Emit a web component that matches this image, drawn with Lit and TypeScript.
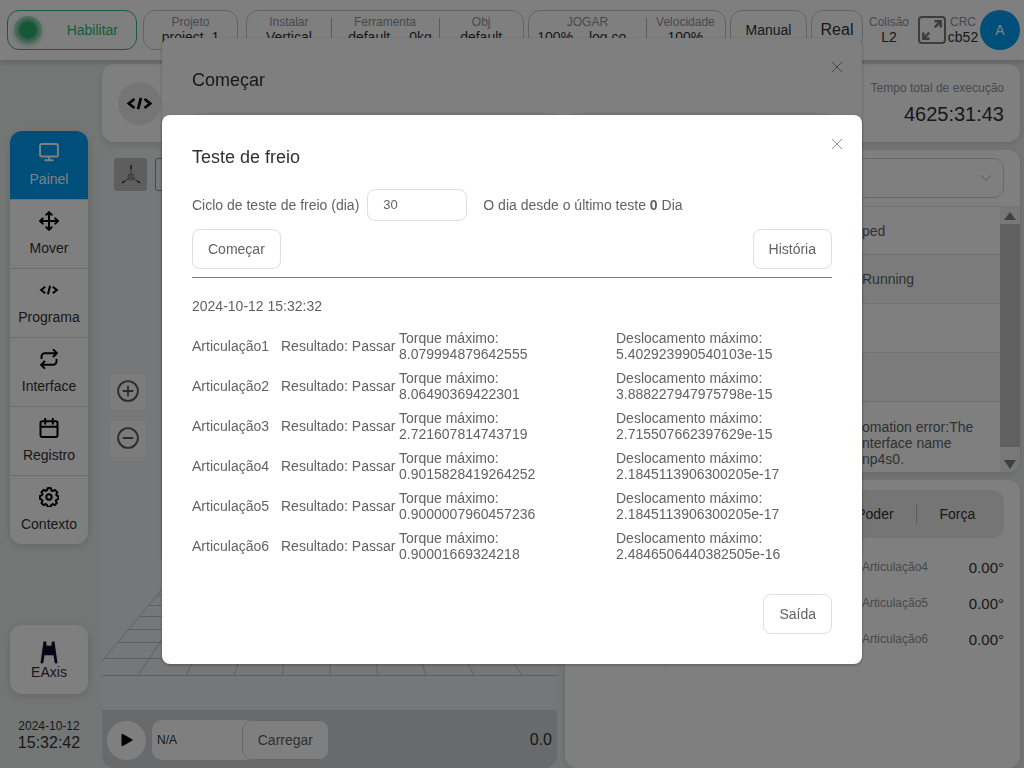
import { LitElement, html, svg, css } from "lit";
import { customElement } from "lit/decorators.js";

const line = (body: unknown, size = 20, weight = 2.4) => html`
  <svg width=${size} height=${size} viewBox="0 0 24 24" fill="none" stroke="currentColor" stroke-width=${weight}
    stroke-linecap="round" stroke-linejoin="round" aria-hidden="true">${body}</svg>`;

const icons = {
  monitor: svg`<rect x="1.300" y="2.500" width="21.400" height="15" rx="2"/><path d="M12 17.500v4.500M7.500 22h9"/>`,
  move: svg`<path d="M12 1.500v21M1.500 12h21M8.800 4.500L12 1.300l3.200 3.200M8.800 19.500l3.200 3.200 3.200-3.200M4.500 8.800L1.300 12l3.200 3.200M19.500 8.800l3.200 3.200-3.200 3.200"/>`,
  code: svg`<path d="M7.500 8L2.500 12l5 4M16.500 8l5 4-5 4M13.300 7l-2.600 10" stroke-linecap="butt" stroke-linejoin="miter"/>`,
  swap: svg`<path d="M17.500 1l4 4-4 4M21 5H7a4 4 0 0 0-4 4v2M6.500 23l-4-4 4-4M3 19h14a4 4 0 0 0 4-4v-2"/>`,
  calendar: svg`<rect x="1.800" y="4" width="20.400" height="18.700" rx="2"/><path d="M7.500 1v6M16.500 1v6M2 10.500h20"/>`,
  gear: svg`<circle cx="12" cy="12" r="3.200"/><path d="M12 1.200l2.300.4.7 2.600 1.600.7 2.400-1.400 1.600 1.300 1.400 1.900-1.300 2.300.6 1.400 2 .7v3.200l-2.400.8-.7 1.600 1.300 2.300-2.600 2.800-2.300-1.300-1.600.7-.8 2.400h-4l-.8-2.400-1.600-.7-2.300 1.300-2.600-2.600 1.300-2.500-.7-1.600-2.400-.8v-3.500l2.400-.8.7-1.600-1.300-2.300 2.600-2.700 2.300 1.300 1.600-.7.8-2.400z"/>`,
};

const results = [
  ["Articulação1", "8.079994879642555", "5.402923990540103e-15"],
  ["Articulação2", "8.06490369422301", "3.888227947975798e-15"],
  ["Articulação3", "2.721607814743719", "2.715507662397629e-15"],
  ["Articulação4", "0.9015828419264252", "2.1845113906300205e-17"],
  ["Articulação5", "0.9000007960457236", "2.1845113906300205e-17"],
  ["Articulação6", "0.90001669324218", "2.4846506440382505e-16"],
];

@customElement("top-bar")
class TopBar extends LitElement {
  static styles = css`
    :host { display: block; background: #fff; box-shadow: 0 2px 6px rgba(0, 0, 0, 0.2); position: relative; }
    * { box-sizing: border-box; }
    .bar { display: flex; align-items: center; gap: 4px; height: 60px; padding: 0 4px 0 7px; }
    button { font: inherit; color: inherit; background: none; cursor: pointer; }
    .enable {
      display: flex; align-items: center; flex: 130 1 130px; height: 40px; margin-right: 2px; padding: 0 18px 0 6px;
      border: 1px solid #2fb673; border-radius: 12px; color: #2fb673; justify-content: space-between;
    }
    .led { width: 28px; height: 28px; border-radius: 50%; background: radial-gradient(circle, #2dae6f 0 8px, #59bf8d 9px, #a5d8bf 13px); box-shadow: 0 2px 5px rgba(45, 174, 111, 0.4); }
    .group { display: flex; height: 40px; padding: 0; border: 1px solid #c4c7cc; border-radius: 12px; }
    .project { flex: 95 1 95px; margin-right: 4px; }
    .setup { flex: 278 1 278px; }
    .play { flex: 198 1 198px; }
    .mode { flex: 77 1 77px; justify-content: center; align-items: center; }
    .real { flex: 52 1 52px; justify-content: center; align-items: center; font-size: 16px; }
    .cell { flex: 84 1 0; min-width: 0; display: flex; flex-direction: column; justify-content: center; text-align: center; line-height: 15px; position: relative; }
    .cell + .cell::before { content: ""; position: absolute; left: 0; top: 7px; bottom: 7px; width: 1px; background: #b4b7bc; }
    .wide { flex-grow: 109; }
    .wider { flex-grow: 124; }
    .label { font-size: 12px; color: #909399; }
    .pair { display: grid; grid-template-columns: 3fr 1fr; padding-right: 6px; white-space: nowrap; }
    .even { grid-template-columns: 1fr 1fr; padding-right: 12px; }
    .info { text-align: center; line-height: 15px; width: 44px; }
    .crc { width: 26px; white-space: nowrap; display: flex; flex-direction: column; align-items: center; }
    .full { display: flex; padding: 0; border: 0; margin-left: 3px; color: #77797d; }
    .avatar { flex: none; width: 40px; height: 40px; padding: 0; border: 0; border-radius: 50%; background: #009cf5; color: #fff; }
  `;
  render() {
    return html`<div class="bar">
      <button class="enable"><span class="led"></span><span>Habilitar</span></button>
      <div class="group project"><div class="cell"><span class="label">Projeto</span><span>project_1</span></div></div>
      <div class="group setup">
        <div class="cell"><span class="label">Instalar</span><span>Vertical</span></div>
        <div class="cell wide"><span class="label">Ferramenta</span><span class="pair"><span>default</span><span>0kg</span></span></div>
        <div class="cell"><span class="label">Obj</span><span>default</span></div>
      </div>
      <div class="group play">
        <div class="cell wider"><span class="label">JOGAR</span><span class="pair even"><span>100%</span><span>log.co</span></span></div>
        <div class="cell"><span class="label">Velocidade</span><span>100%</span></div>
      </div>
      <button class="group mode">Manual</button>
      <button class="group real">Real</button>
      <div class="info"><div class="label">Colisão</div><div>L2</div></div>
      <button class="full" aria-label="Tela cheia">
        <svg width="28" height="28" viewBox="0 0 28 28" fill="none" stroke="currentColor" stroke-width="2">
          <rect x="1" y="1" width="26" height="26" rx="3"/><path d="M16.500 5.300h6.200v6.200M22.700 5.300l-6 6M11.500 22.700H5.300v-6.200M5.300 22.700l6-6" stroke-width="2.400"/>
        </svg>
      </button>
      <div class="info crc"><span class="label">CRC</span><span>cb52</span></div>
      <button class="avatar">A</button>
    </div>`;
  }
}

@customElement("side-nav")
class SideNav extends LitElement {
  static styles = css`
    :host { display: flex; flex-direction: column; padding: 71px 0 16px 10px; }
    * { box-sizing: border-box; }
    nav, .axis { background: #fff; border-radius: 12px; box-shadow: 0 2px 8px rgba(0, 0, 0, 0.14); overflow: hidden; }
    a {
      display: flex; flex-direction: column; align-items: center; justify-content: center; gap: 9px; height: 69px;
      padding-bottom: 2px; line-height: 16px; color: #303133; text-decoration: none; border-bottom: 1px solid #dcdfe2;
    }
    a:last-child { height: 68px; border-bottom: 0; }
    a svg { color: #000; }
    a.on { background: #009cf5; color: #fff; border-bottom-color: #dcdfe2; }
    a.on svg { color: #fff; }
    .axis { margin-top: auto; padding: 16px 0 14px; width: 100%; border: 0; font: inherit; color: #303133; line-height: 16px; }
    .axis svg { display: block; margin: 0 auto; }
    .clock { margin-top: 24px; text-align: center; color: #303133; }
    .date { font-size: 12px; line-height: 16px; }
    .time { font-size: 16px; line-height: 18px; }
  `;
  render() {
    const items: [string, unknown][] = [
      ["Painel", icons.monitor], ["Mover", icons.move], ["Programa", icons.code],
      ["Interface", icons.swap], ["Registro", icons.calendar], ["Contexto", icons.gear],
    ];
    return html`
      <nav>${items.map(([name, icon], i) => html`<a href="#" class=${i === 0 ? "on" : ""}>${line(icon)}<span>${name}</span></a>`)}</nav>
      <button class="axis">
        <svg width="18" height="23" viewBox="0 0 18 23" fill="#0a0a28"><path d="M3.500.500h2.700l.4 4.300h4.800l.4-4.300h2.700l3 21.700h-2.700l-1.300-8H4.500l-1.300 8H.5z"/></svg>
        EAxis
      </button>
      <div class="clock"><div class="date">2024-10-12</div><div class="time">15:32:42</div></div>`;
  }
}

@customElement("view-panel")
class ViewPanel extends LitElement {
  static styles = css`
    :host { display: flex; flex-direction: column; background: #eceef3; border-radius: 12px; overflow: hidden; }
    * { box-sizing: border-box; }
    .scene { flex: 1; position: relative; overflow: hidden; }
    .floor { position: absolute; left: 0; top: 0; width: 100%; height: 100%; }
    .tools { display: flex; gap: 8px; padding: 8px 12px; position: relative; }
    .tool { width: 33px; height: 33px; padding: 0; border: 0; border-radius: 3px; background: #bcbcbe; display: grid; place-items: center; }
    .plain { background: none; border: 1px solid #8c8e92; }
    .zoom { display: flex; flex-direction: column; gap: 11px; padding: 175px 8px 0; position: relative; }
    .zoom button { width: 36px; height: 36px; padding: 0 0 2px; border: 0; border-radius: 4px; background: #f8f9fb; color: #55585c; display: grid; place-items: center; }
    .bar { display: flex; align-items: center; height: 58px; padding: 2px 5px 0; background: #d3d5d9; }
    .run { width: 39px; height: 39px; padding: 0; border: 0; border-radius: 50%; background: #fff; display: grid; place-items: center; }
    .file { display: flex; margin-left: 6px; height: 40px; background: #fff; border-radius: 10px; width: 177px; }
    .file input { flex: 1; min-width: 0; border: 0; background: none; padding: 0 5px; font: inherit; font-size: 12px; color: #303133; }
    .file button { padding: 0 15px; border: 1px solid #d0d3d9; border-radius: 10px; background: #fff; font: inherit; color: #606266; }
    .value { margin-left: auto; font-size: 16px; color: #303133; }
  `;
  render() {
    const spokes = Array.from({ length: 11 }, (_, k) => 228 + (k - 5) * 48);
    const rows = [525.5, 508.5, 492.5, 479.5, 466.5, 455.5, 445.5, 437.5];
    return html`
      <div class="scene">
        <svg class="floor" fill="none" stroke="#bcbfc4">
          ${spokes.map((x) => {
            const t = 0.36;
            return svg`<path d="M${x} 525.5L${x + (228 - x) * t} ${525.5 - 287 * t}"/>`;
          })}
          ${rows.map((y) => {
            const half = (240 * (y - 238.5)) / 287;
            return svg`<path d="M${228 - half} ${y}H${228 + half}"/>`;
          })}
        </svg>
        <div class="tools">
          <button class="tool" aria-label="Eixos">
            <svg width="22" height="22" viewBox="0 0 22 22" fill="none" stroke="#66686b">
              <circle cx="11" cy="13" r="3"/><path d="M11 13V4M11 13l-8 5M11 13l8 5"/><path d="M11 1v4M2 19l3-2M20 19l-3-2" stroke="#333" stroke-width="1.500"/>
            </svg>
          </button>
          <button class="tool plain" aria-label="Enquadrar">
            <svg width="20" height="22" viewBox="0 0 20 22" fill="none" stroke="#333" stroke-width="2"><path d="M1 5V1h5M1 13v5h5M14 1h5v4M19 13v5h-5"/></svg>
          </button>
        </div>
        <div class="zoom">
          <button aria-label="Ampliar">${line(svg`<circle cx="12" cy="12" r="10.800"/><path d="M12 7v10M7 12h10"/>`, 22, 2)}</button>
          <button aria-label="Reduzir">${line(svg`<circle cx="12" cy="12" r="10.800"/><path d="M7 12h10"/>`, 22, 2)}</button>
        </div>
      </div>
      <div class="bar">
        <button class="run" aria-label="Executar"><svg width="12" height="14" viewBox="0 0 12 14"><path d="M1.500 1.800v10.400L10.500 7z" stroke="#000" stroke-width="2" stroke-linejoin="round"/></svg></button>
        <div class="file"><input aria-label="Arquivo" value="N/A" /><button>Carregar</button></div>
        <span class="value">0.0</span>
      </div>`;
  }
}

@customElement("status-panels")
class StatusPanels extends LitElement {
  static styles = css`
    :host { display: grid; grid-template-rows: 322px 1fr; gap: 8px; }
    * { box-sizing: border-box; }
    .card { background: #fff; border-radius: 12px; box-shadow: 0 2px 6px rgba(0, 0, 0, 0.12); overflow: hidden; }
    .log { display: flex; flex-direction: column; }
    .pick { position: relative; margin: 8px 16px; }
    select { width: 100%; height: 40px; border: 1px solid #d0d3d9; border-radius: 10px; background: #fff; appearance: none; font: inherit; padding: 0 16px; color: #606266; }
    .pick svg { position: absolute; right: 12px; top: 14px; pointer-events: none; }
    .list { display: flex; flex: 1; min-height: 0; border-top: 1px solid #e4e7ed; }
    .rows { flex: 1; overflow: hidden; }
    table { width: 100%; border-spacing: 0; color: #606266; line-height: 16px; table-layout: fixed; }
    td { height: 49px; padding: 0 10px; border-bottom: 1px solid #e0e3e8; white-space: pre-line; vertical-align: middle; }
    td:first-child { width: 287px; }
    tr:first-child td { height: 48px; }
    tr:nth-child(even) td { background: #f7f7f7; }
    tr:last-child td { height: 82px; border-bottom: 0; }
    .track { width: 20px; background: #f1f1f1; display: flex; flex-direction: column; align-items: center; }
    .track svg { flex: none; }
    .thumb { width: 100%; flex: 1; background: #c1c1c1; }
    .joints { padding: 10px 16px 16px; }
    .tabs { display: flex; padding: 0 6px; height: 48px; align-items: center; background: #ebebeb; border-radius: 12px; }
    .tabs button { flex: 1; height: 20px; padding: 0; border: 0; background: none; font: inherit; color: #303133; }
    .tabs button + button { border-left: 1px solid #b4b7bc; }
    .values { display: grid; grid-template-columns: 85px 1fr 142px; margin-top: 11px; }
    .half { height: 120px; border-right: 1px solid #e4e7ed; }
    dl { margin: 0; grid-column: 3; }
    .row { display: flex; justify-content: space-between; align-items: center; height: 36px; }
    dt { font-size: 12px; color: #909399; }
    dd { margin: 0; font-size: 15px; color: #303133; }
  `;
  render() {
    const messages = ["ped", "Running", "", "", "omation error:The\nnterface name\nnp4s0."];
    return html`
      <section class="card log">
        <div class="pick">
          <select aria-label="Filtro"><option></option></select>
          <svg width="12" height="12" viewBox="0 0 12 12" fill="none" stroke="#a8abb2"><path d="M1 3.500l5 5 5-5"/></svg>
        </div>
        <div class="list">
          <div class="rows"><table><tbody>${messages.map((m) => html`<tr><td></td><td>${m}</td></tr>`)}</tbody></table></div>
          <div class="track">
            <svg width="20" height="17" viewBox="0 0 20 17"><path d="M4 13h12l-6-8z" fill="#808080"/></svg>
            <span class="thumb"></span>
            <svg width="20" height="25" viewBox="0 0 20 25"><path d="M4 13h12l-6 9z" fill="#808080"/></svg>
          </div>
        </div>
      </section>
      <section class="card joints">
        <div class="tabs"><button aria-label="Articulações"></button><button aria-label="Pose"></button><button aria-label="Velocidade"></button><button>Poder</button><button>Força</button></div>
        <div class="values"><div class="half"></div>
          <dl>${["Articulação4", "Articulação5", "Articulação6"].map((n) => html`<div class="row"><dt>${n}</dt><dd>0.00°</dd></div>`)}</dl>
        </div>
      </section>`;
  }
}

@customElement("modal-box")
class ModalBox extends LitElement {
  static properties = { heading: {} };
  declare heading: string;
  static styles = css`
    :host { display: block; box-sizing: border-box; width: 700px; max-width: 96vw; padding: 30px; background: #fff; border-radius: 8px; box-shadow: 0 1px 3px rgba(0, 0, 0, 0.3); position: relative; }
    h2 { margin: 0; font-size: 18px; line-height: 24px; font-weight: 400; color: #303133; }
    .close { position: absolute; top: 20px; right: 16px; width: 18px; height: 18px; padding: 0; border: 0; background: none; color: #909399; display: grid; place-items: center; }
  `;
  render() {
    return html`<h2>${this.heading}</h2>
      <button class="close" aria-label="Fechar"><svg width="12" height="12" viewBox="0 0 12 12" fill="none" stroke="currentColor"><path d="M1 1l10 10M11 1L1 11"/></svg></button>
      <slot></slot>`;
  }
}

@customElement("app-root")
class AppRoot extends LitElement {
  static styles = css`
    :host {
      display: flex; flex-direction: column; height: 100vh; overflow: hidden; background: #e8edeb;
      font: 14px "Liberation Sans", Arial, sans-serif; color: #303133;
    }
    * { box-sizing: border-box; }
    .body { flex: 1; min-height: 0; display: grid; grid-template-columns: 88px 1fr; column-gap: 14px; padding-right: 4px; }
    .work { display: grid; grid-template-columns: 1fr 1fr; grid-template-rows: 78px minmax(0, 1fr); gap: 8px; padding-top: 4px; min-height: 0; }
    .head { grid-column: 1 / -1; display: flex; align-items: center; justify-content: space-between; padding: 0 16px; background: #fff; border-radius: 12px; box-shadow: 0 2px 6px rgba(0, 0, 0, 0.12); }
    .code { width: 43px; height: 43px; padding: 0; border: 0; border-radius: 50%; background: #ebebeb; display: grid; place-items: center; color: #000; }
    .total { padding-top: 2px; text-align: right; font-size: 12px; line-height: 20px; color: #909399; }
    .total strong { display: block; font-size: 20px; line-height: 32px; font-weight: 400; color: #303133; }
    .layer { position: fixed; inset: 0; display: flex; justify-content: center; align-items: flex-start; }
    .back { padding-top: 5vh; }
    .front { padding-top: 15vh; background: rgba(0, 0, 0, 0.5); }
    .panes { display: grid; grid-template-columns: 368px 1fr; gap: 8px; margin-top: 20px; }
    .pane { height: 420px; border-radius: 12px; background: #f2f3f5; }
    .cycle { display: flex; align-items: center; margin-top: 20px; color: #606266; }
    .cycle input { width: 100px; height: 32px; margin: 0 16px 0 8px; padding: 0 15px 2px; border: 1px solid #dcdfe6; border-radius: 8px; font: inherit; font-size: 13px; color: #606266; }
    .actions { display: flex; justify-content: space-between; padding: 8px 0; border-bottom: 1px solid #808080; }
    .btn { height: 40px; padding: 0 15px; border: 1px solid #dcdfe6; border-radius: 8px; background: #fff; font: inherit; color: #606266; cursor: pointer; }
    .stamp { margin: 20px 0 12px; line-height: 16px; color: #606266; }
    table { width: 100%; border-collapse: collapse; table-layout: fixed; line-height: 16px; color: #606266; }
    th, td { height: 40px; padding: 0; font-weight: 400; text-align: left; vertical-align: middle; white-space: nowrap; }
    .joint { width: 89px; }
    .result { width: 118px; }
    .torque { width: 217px; }
    .foot { display: flex; justify-content: flex-end; margin-top: 28px; }
  `;
  render() {
    return html`
      <top-bar></top-bar>
      <div class="body">
        <side-nav></side-nav>
        <main class="work">
          <section class="head">
            <button class="code" aria-label="Programa">${line(icons.code, 27)}</button>
            <div class="total">Tempo total de execução<strong>4625:31:43</strong></div>
          </section>
          <view-panel></view-panel>
          <status-panels></status-panels>
        </main>
      </div>
      <div class="layer back">
        <modal-box .heading=${"Começar"}><div class="panes"><div class="pane"></div><div class="pane"></div></div></modal-box>
      </div>
      <div class="layer front">
        <modal-box role="dialog" aria-modal="true" .heading=${"Teste de freio"}>
          <div class="cycle">
            <label for="days">Ciclo de teste de freio (dia)</label><input id="days" value="30" />
            <span>O dia desde o último teste <b>0</b> Dia</span>
          </div>
          <div class="actions"><button class="btn">Começar</button><button class="btn">História</button></div>
          <p class="stamp">2024-10-12 15:32:32</p>
          <table>
            <colgroup><col class="joint" /><col class="result" /><col class="torque" /><col /></colgroup>
            <tbody>${results.map(([name, torque, shift]) => html`<tr>
              <th scope="row">${name}</th><td>Resultado: Passar</td>
              <td>Torque máximo:<br />${torque}</td><td>Deslocamento máximo:<br />${shift}</td></tr>`)}</tbody>
          </table>
          <div class="foot"><button class="btn">Saída</button></div>
        </modal-box>
      </div>`;
  }
}
